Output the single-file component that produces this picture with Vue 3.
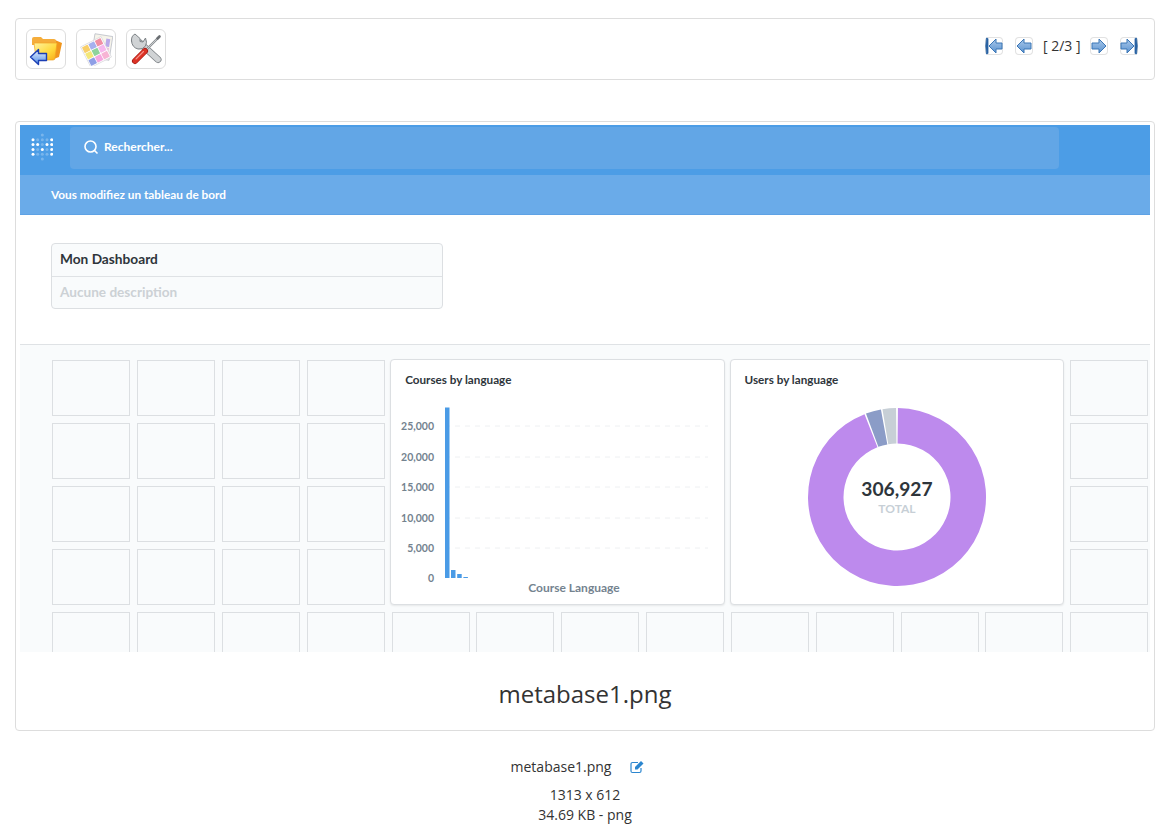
<script setup>
// shares of the donut, in degrees clockwise from the top
const slices = [
  { from: 0.6, to: 338.6, color: "#bd8aed" },
  { from: 339.6, to: 349.6, color: "#8b9cc7" },
  { from: 350.6, to: 359.4, color: "#c7cfd6" },
];
const polar = (r, deg) => {
  const a = ((deg - 90) * Math.PI) / 180;
  return `${(90 + r * Math.cos(a)).toFixed(2)} ${(90 + r * Math.sin(a)).toFixed(2)}`;
};
const slicePath = ({ from, to }) => {
  const large = to - from > 180 ? 1 : 0;
  return `M${polar(89, from)}A89 89 0 ${large} 1 ${polar(89, to)}L${polar(53.5, to)}A53.5 53.5 0 ${large} 0 ${polar(53.5, from)}Z`;
};

const ticks = [
  { label: "25,000", y: 26 },
  { label: "20,000", y: 57 },
  { label: "15,000", y: 87 },
  { label: "10,000", y: 118 },
  { label: "5,000", y: 148 },
];
const bars = [
  { x: 55, y: 7.5, h: 170.5 },
  { x: 61, y: 170, h: 8 },
  { x: 67.2, y: 174, h: 4 },
  { x: 73.4, y: 177, h: 1 },
];

// metabase logo, an M drawn in dots
const logoDots = [];
const brightDots = ["0,1", "0,2", "0,3", "0,4", "1,2", "2,3", "3,2", "4,1", "4,2", "4,3", "4,4"];
for (let c = 0; c < 5; c++) {
  for (let r = 1; r < 5; r++) logoDots.push({ c, r, on: brightDots.includes(`${c},${r}`) });
}
logoDots.push({ c: 2, r: 0, on: false }, { c: 2, r: 5, on: false });

const swatches = [
  ["#f8cf6a", "#a6b0ee", "#f08fa4"],
  ["#f3e77a", "#8fd39b", "#f6b8ec"],
  ["#8f9fe6", "#f5a8e0", "#f7b4d4"],
];
</script>

<template>
  <div class="page">
    <div class="toolbar">
      <div class="tools">
        <a class="tool">
          <svg width="34" height="34" viewBox="0 0 34 34">
            <defs>
              <linearGradient id="folderFront" x1="0" y1="0" x2="1" y2="1">
                <stop offset="0" stop-color="#fff3a0" />
                <stop offset="0.6" stop-color="#ffd83a" />
                <stop offset="1" stop-color="#f7a818" />
              </linearGradient>
              <linearGradient id="backArrow" x1="0" y1="0" x2="0" y2="1">
                <stop offset="0" stop-color="#eef5ff" />
                <stop offset="1" stop-color="#4d8be6" />
              </linearGradient>
              <linearGradient id="navArrow" x1="0" y1="0" x2="0" y2="1">
                <stop offset="0" stop-color="#a9c8ea" />
                <stop offset="1" stop-color="#5c93d0" />
              </linearGradient>
            </defs>
            <path d="M26 8l7 3-3 14-8 3z" fill="#f0951c" />
            <path d="M3 7q0-2 2-2h7l2 2h11q2 0 2 2v4H3z" fill="#f5ad3b" />
            <path d="M5 11h23l-2 15q0 2-2 2H9q-2 0-2-2z" fill="url(#folderFront)" stroke="#f0a422" stroke-width="0.7" />
            <path d="M1.500 25l8-7.500v4h8v7h-8v4z" fill="url(#backArrow)" stroke="#1c3fb4" stroke-width="1.400" stroke-linejoin="round" />
          </svg>
        </a>
        <a class="tool">
          <svg width="34" height="34" viewBox="0 0 34 34">
            <g transform="rotate(9 23 15)">
              <rect x="14" y="3" width="18" height="24" fill="#f6f4ea" stroke="#b4b8c2" stroke-width="0.7" />
              <rect x="26" y="6" width="4" height="8" fill="#b9a9ea" />
              <rect x="26" y="15" width="4" height="8" fill="#f1b5dc" />
            </g>
            <g transform="rotate(-27 17 20)">
              <rect x="5.500" y="8.500" width="23" height="23" fill="#fff" stroke="#d2d2d6" stroke-width="0.6" />
              <template v-for="(row, r) in swatches" :key="r">
                <rect
                  v-for="(fill, c) in row"
                  :key="c"
                  :x="6.500 + c * 7.200"
                  :y="9.500 + r * 7.200"
                  width="6.400"
                  height="6.400"
                  rx="0.500"
                  :fill="fill"
                />
              </template>
            </g>
          </svg>
        </a>
        <a class="tool">
          <svg width="34" height="34" viewBox="0 0 34 34" fill="none" stroke-linecap="round">
            <path d="M11 11l18 16.500" stroke="#7d8286" stroke-width="7" />
            <path d="M11 11l18 16.500" stroke="#d0d3d5" stroke-width="5.400" />
            <path d="M2.500 9q-.5-5 3.500-7l5 4.500v3l3 .5 2.500-4q2 4.500 0 8-3 4-7.500 3Q3 15.500 2.500 9z" fill="#d0d3d5" stroke="#7d8286" stroke-width="1" stroke-linejoin="round" />
            <path d="M18 17L29 6" stroke="#8c9094" stroke-width="2.400" />
            <path d="M18 17L29 6" stroke="#cfd2d4" stroke-width="0.900" />
            <path d="M28.500 6.500l2-2" stroke="#6a6e72" stroke-width="2.600" />
            <path d="M16 19L6 29" stroke="#a01810" stroke-width="6" />
            <path d="M16 19L6 29" stroke="#dc3226" stroke-width="4.600" />
            <path d="M14.500 19.500L7 27" stroke="#f6958b" stroke-width="1.100" />
          </svg>
        </a>
      </div>
      <div class="pager">
        <a class="nav">
          <svg width="18" height="18" viewBox="0 0 18 18"><path d="M1.500 1q-1.500 8 0 16l1.500-.5V1.500z" fill="#2a63a3" stroke="#2a63a3" stroke-width="0.800" /><path d="M4 9l7-7v4h6v6h-6v4z" fill="url(#navArrow)" stroke="#3b76b6" /></svg>
        </a>
        <a class="nav">
          <svg width="18" height="18" viewBox="0 0 18 18"><path d="M2 9l7-7v4h7v6H9v4z" fill="url(#navArrow)" stroke="#3b76b6" /></svg>
        </a>
        <span class="count">[ 2/3 ]</span>
        <a class="nav">
          <svg width="18" height="18" viewBox="0 0 18 18"><path d="M16 9L9 2v4H2v6h7v4z" fill="url(#navArrow)" stroke="#3b76b6" /></svg>
        </a>
        <a class="nav">
          <svg width="18" height="18" viewBox="0 0 18 18"><path d="M16.500 1q1.500 8 0 16l-1.500-.5V1.500z" fill="#2a63a3" stroke="#2a63a3" stroke-width="0.800" /><path d="M14 9L7 2v4H1v6h6v4z" fill="url(#navArrow)" stroke="#3b76b6" /></svg>
        </a>
      </div>
    </div>

    <div class="viewer">
      <div class="shot">
        <div class="mb-nav">
          <svg class="mb-logo" width="22" height="30" viewBox="0 0 22 30">
            <circle
              v-for="d in logoDots"
              :key="`${d.c}-${d.r}`"
              :cx="2 + d.c * 4.670"
              :cy="3 + d.r * 4.800"
              r="1.500"
              fill="#fff"
              :opacity="d.on ? 1 : 0.25"
            />
          </svg>
          <div class="mb-search">
            <svg width="16" height="16" viewBox="0 0 16 16" fill="none" stroke="#fff" stroke-width="1.600">
              <circle cx="7.500" cy="7.500" r="5.500" />
              <path d="M11.500 11.500l3 3" />
            </svg>
            <span>Rechercher...</span>
          </div>
        </div>
        <div class="mb-edit">Vous modifiez un tableau de bord</div>
        <div class="mb-head">
          <div class="mb-info">
            <div class="mb-name">Mon Dashboard</div>
            <div class="mb-desc">Aucune description</div>
          </div>
        </div>
        <div class="mb-grid">
          <div v-for="n in 4" :key="`a${n}`" class="cell"></div>

          <div class="card">
            <div class="card-title">Courses by language</div>
            <svg class="plot" width="333" height="205" viewBox="0 0 333 205">
              <g v-for="t in ticks" :key="t.label">
                <line x1="55" x2="318" :y1="t.y" :y2="t.y" class="grid-line" />
                <text x="44" :y="t.y + 4" text-anchor="end" class="tick">{{ t.label }}</text>
              </g>
              <text x="44" y="182" text-anchor="end" class="tick">0</text>
              <rect v-for="b in bars" :key="b.x" :x="b.x" :y="b.y" width="4.500" :height="b.h" fill="#4a9be6" />
              <text x="184" y="192" text-anchor="middle" class="axis">Course Language</text>
            </svg>
          </div>

          <div class="card">
            <div class="card-title">Users by language</div>
            <div class="donut">
              <svg width="180" height="180" viewBox="0 0 180 180">
                <path v-for="s in slices" :key="s.from" :d="slicePath(s)" :fill="s.color" />
              </svg>
              <div class="donut-label">
                <div class="donut-value">306,927</div>
                <div class="donut-total">TOTAL</div>
              </div>
            </div>
          </div>

          <div v-for="n in 29" :key="`b${n}`" class="cell"></div>
        </div>
      </div>
      <h1 class="caption">metabase1.png</h1>
    </div>

    <div class="meta">
      <div class="meta-name">
        <span>metabase1.png</span>
        <svg width="14" height="14" viewBox="0 0 14 14" fill="none">
          <path d="M11 8v3q0 1.500-1.500 1.500H2.500Q1 12.500 1 11V4q0-1.500 1.500-1.500H8" stroke="#2b86cf" stroke-width="1.200" />
          <path d="M5 7l6-6 2.500 2.500-6 6H5z" fill="#2b86cf" />
        </svg>
      </div>
      <div class="meta-line first">1313 x 612</div>
      <div class="meta-line">34.69 KB - png</div>
    </div>
  </div>
</template>

<style scoped>
.page {
  box-sizing: border-box;
  height: 826px;
  padding: 18px 14px 0 15px;
  font-family: "Open Sans", "Noto Sans", sans-serif;
  font-size: 14px;
  color: #333;
  overflow: hidden;
}
.toolbar {
  box-sizing: border-box;
  height: 62px;
  border: 1px solid #ddd;
  border-radius: 4px;
  padding: 0 16px 0 10px;
  display: flex;
  justify-content: space-between;
  align-items: center;
}
.tools {
  display: flex;
  gap: 10px;
}
.tool {
  box-sizing: border-box;
  width: 40px;
  height: 40px;
  border: 1px solid #ddd;
  border-radius: 6px;
  display: flex;
  align-items: center;
  justify-content: center;
}
.pager {
  display: flex;
  align-items: center;
  gap: 12px;
  margin-top: -6px;
}
.nav {
  display: flex;
  width: 18px;
  height: 18px;
  border-radius: 4px;
  box-shadow: inset 0 0 0 1px #e2e2e2;
}
.count {
  width: 37px;
  margin: 0 -2px;
  text-align: center;
  white-space: nowrap;
  font-size: 14px;
  line-height: 18px;
}
.viewer {
  box-sizing: border-box;
  height: 610px;
  margin-top: 41px;
  border: 1px solid #ddd;
  border-radius: 4px;
  padding: 3px 4px 0;
}
.shot {
  height: 527px;
  overflow: hidden;
  font-family: "Lato", sans-serif;
  font-weight: 700;
  display: flex;
  flex-direction: column;
}
.mb-nav {
  box-sizing: border-box;
  height: 50px;
  flex: none;
  background: #4c9de6;
  display: flex;
  align-items: flex-start;
  padding: 2px 0 0 11px;
}
.mb-logo {
  margin-top: 5px;
}
.mb-search {
  box-sizing: border-box;
  width: 989px;
  height: 42px;
  margin-left: 17px;
  padding: 0 0 3px 13px;
  border-radius: 4px;
  background: #62a6e6;
  color: #fff;
  font-size: 12px;
  display: flex;
  align-items: center;
  gap: 5px;
}
.mb-edit {
  box-sizing: border-box;
  height: 40px;
  flex: none;
  background: #6aabe9;
  border-bottom: 1px solid #5ea2e5;
  padding-left: 31px;
  color: #fff;
  font-size: 11.800px;
  line-height: 39px;
}
.mb-head {
  box-sizing: border-box;
  height: 130px;
  flex: none;
  padding: 28px 0 0 31px;
  border-bottom: 1px solid #dfe2e5;
}
.mb-info {
  box-sizing: border-box;
  width: 392px;
  height: 66px;
  background: #f9fbfc;
  border: 1px solid #dcdfe2;
  border-radius: 4px;
}
.mb-name {
  height: 32px;
  padding-left: 8px;
  border-bottom: 1px solid #dfe2e5;
  font-size: 13.700px;
  line-height: 30px;
  color: #2e353b;
}
.mb-desc {
  padding-left: 8px;
  font-size: 13.600px;
  line-height: 31px;
  color: #ccd1d5;
}
.mb-grid {
  flex: 1;
  background: #f9fbfc;
  padding: 15px 0 0 32.200px;
  display: grid;
  grid-template-columns: repeat(13, 78px);
  grid-auto-rows: 56px;
  gap: 7px 6.850px;
  overflow: hidden;
}
.cell {
  border: 1px solid #dcdfe2;
  box-sizing: border-box;
}
.card {
  grid-column: span 4;
  grid-row: span 4;
  box-sizing: border-box;
  margin: -1px -1px 0 -1.400px;
  background: #fff;
  border: 1px solid #dcdfe2;
  border-radius: 4px;
  box-shadow: 0 1px 2px rgba(0, 0, 0, 0.08);
  position: relative;
}
.card-title {
  padding: 12px 0 0 14px;
  font-size: 11.700px;
  line-height: 14px;
  color: #2e353b;
}
.plot {
  position: absolute;
  left: -1.200px;
  top: 40px;
}
.grid-line {
  stroke: #eef0f2;
  stroke-width: 1;
  stroke-dasharray: 5 5;
}
.tick {
  font-size: 10.500px;
  fill: #74838f;
}
.axis {
  font-size: 12px;
  fill: #74838f;
}
.donut {
  position: absolute;
  left: 76.400px;
  top: 47px;
  width: 180px;
  height: 180px;
}
.donut-label {
  position: absolute;
  inset: 0;
  display: flex;
  flex-direction: column;
  align-items: center;
  justify-content: center;
}
.donut-value {
  font-size: 19.200px;
  line-height: 24px;
  margin-bottom: 2px;
  margin-top: -2px;
  color: #2e353b;
}
.donut-total {
  font-size: 12px;
  line-height: 12px;
  color: #c7cfd6;
}
.caption {
  margin: 26px 0 0;
  text-align: center;
  font-size: 24px;
  font-weight: 400;
  line-height: 32px;
  color: #333;
}
.meta {
  margin-top: 26px;
  text-align: center;
  line-height: 20px;
}
.meta-name {
  display: flex;
  justify-content: center;
  align-items: center;
  gap: 19px;
  padding-right: 15px;
}
.meta-line.first {
  margin-top: 8px;
}
</style>
<style>
html,
body {
  background: #fff;
  overflow: hidden;
}
</style>
